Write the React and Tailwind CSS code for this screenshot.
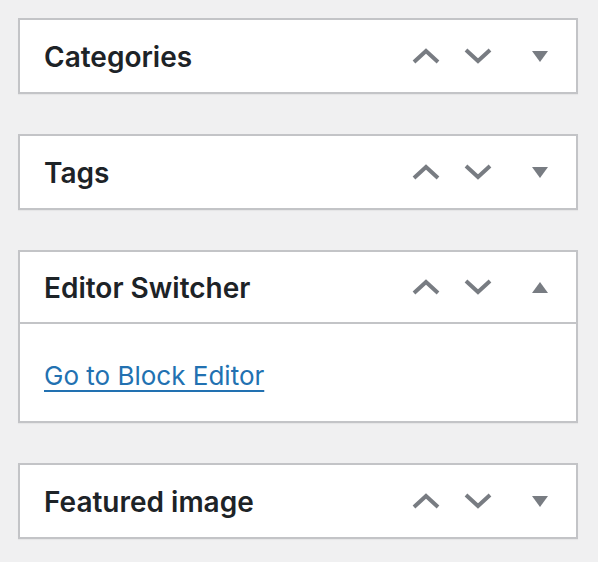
import { useState } from "react";

const ChevronUp = () => (
  <svg width="28" height="16" viewBox="0 0 28 16" fill="none">
    <polyline points="2,14 14,3 26,14" stroke="#787c82" strokeWidth="4" />
  </svg>
);

const ChevronDown = () => (
  <svg width="28" height="16" viewBox="0 0 28 16" fill="none">
    <polyline points="2,2 14,13 26,2" stroke="#787c82" strokeWidth="4" />
  </svg>
);

const Triangle = ({ open }) => (
  <svg width="16" height="11" viewBox="0 0 16 11">
    {open ? (
      <polygon points="0,11 8,0 16,11" fill="#787c82" />
    ) : (
      <polygon points="0,0 16,0 8,11" fill="#787c82" />
    )}
  </svg>
);

const MetaBox = ({ title, defaultOpen = false, children }) => {
  const [open, setOpen] = useState(defaultOpen);

  return (
    <div className="w-[560px] border-2 border-[#c3c4c7] bg-white shadow-[0_1px_1px_rgba(0,0,0,0.04)]">
      <div className={`flex h-[72px] items-center ${open ? "border-b-2 border-[#c3c4c7]" : ""}`}>
        <h2 className="flex-1 pl-[24px] pt-[2px] text-[28px] font-semibold text-[#1d2327]">{title}</h2>
        <button className="flex h-[72px] w-[52px] items-center justify-center">
          <ChevronUp />
        </button>
        <button className="flex h-[72px] w-[52px] items-center justify-center">
          <ChevronDown />
        </button>
        <button
          onClick={() => setOpen(!open)}
          className="flex h-[72px] w-[72px] items-center justify-center"
        >
          <Triangle open={open} />
        </button>
      </div>
      {open && <div className="flex h-[97px] items-center px-[24px] pt-[6px]">{children}</div>}
    </div>
  );
};

export default function App() {
  return (
    <div className="min-h-screen bg-[#f0f0f1] pl-[18px] pt-[18px] font-['Inter',sans-serif]">
      <div className="flex flex-col gap-[40px]">
        <MetaBox title="Categories" />
        <MetaBox title="Tags" />
        <MetaBox title="Editor Switcher" defaultOpen>
          <a href="#" className="text-[26px] text-[#2271b1] underline underline-offset-[5px] decoration-2">
            Go to Block Editor
          </a>
        </MetaBox>
        <MetaBox title="Featured image" />
      </div>
    </div>
  );
}
